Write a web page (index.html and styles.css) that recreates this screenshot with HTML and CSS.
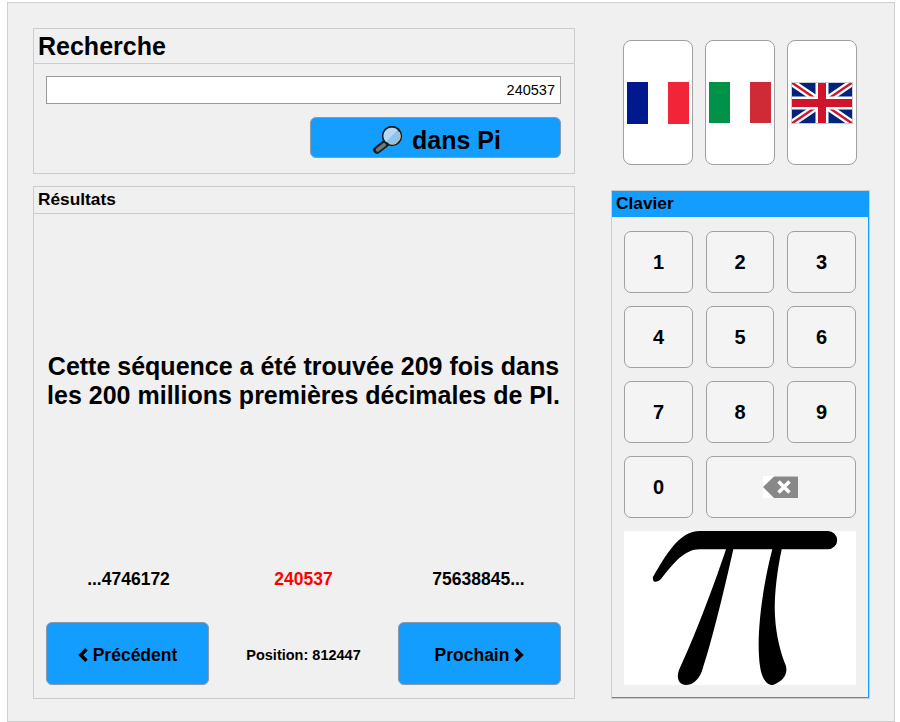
FILE: index.html
```html
<!DOCTYPE html>
<html lang="fr">
<head>
<meta charset="utf-8">
<title>Recherche dans Pi</title>
<link rel="stylesheet" href="styles.css">
</head>
<body>
<main class="app">
  <div class="left">
    <section class="panel search">
      <h1 class="panel-title big">Recherche</h1>
      <div class="search-body">
        <div class="field">240537</div>
        <button class="btn primary go">
          <svg class="lens" width="30" height="28" viewBox="0 0 30 28">
            <path d="M12.5 17.5 L4 24" stroke="#1c1c1c" stroke-width="7.5" stroke-linecap="round"/>
            <path d="M11.5 18.5 L4.5 24" stroke="#6d7a7c" stroke-width="3.5" stroke-linecap="round"/>
            <circle cx="19" cy="10" r="9.2" fill="#8fc3ee" stroke="#1c1c1c" stroke-width="2"/>
            <path d="M13 16 A8 8 0 0 1 24.5 4 Z" fill="#b5d8f5"/>
            <path d="M26 6 A8 8 0 0 1 16 17.5" fill="none" stroke="#e8c98f" stroke-width="1"/>
          </svg>
          <span class="go-label">dans Pi</span>
        </button>
      </div>
    </section>
    <section class="panel results">
      <h2 class="panel-title">Résultats</h2>
      <div class="results-body">
        <p class="message">Cette séquence a été trouvée 209 fois dans les 200 millions premières décimales de PI.</p>
        <div class="digits">
          <span class="d">...4746172</span>
          <span class="d hit">240537</span>
          <span class="d">75638845...</span>
        </div>
        <div class="nav">
          <button class="btn primary step">
            <svg class="chev" width="10" height="14" viewBox="0 0 10 14"><path d="M8.5 1.2 L2.7 7 L8.5 12.8" fill="none" stroke="#000" stroke-width="3.4"/></svg>
            <span>Précédent</span>
          </button>
          <span class="pos">Position: 812447</span>
          <button class="btn primary step">
            <span>Prochain</span>
            <svg class="chev" width="10" height="14" viewBox="0 0 10 14"><path d="M1.5 1.2 L7.3 7 L1.5 12.8" fill="none" stroke="#000" stroke-width="3.4"/></svg>
          </button>
        </div>
      </div>
    </section>
  </div>
  <div class="right">
    <div class="flags">
      <button class="flag">
        <svg width="62" height="42" viewBox="0 0 62 42"><rect width="21" height="42" fill="#00198c"/><rect x="21" width="20" height="42" fill="#fff"/><rect x="41" width="21" height="42" fill="#f22438"/></svg>
      </button>
      <button class="flag">
        <svg width="62" height="41" viewBox="0 0 62 41"><rect width="21" height="41" fill="#009246"/><rect x="21" width="20" height="41" fill="#fff"/><rect x="41" width="21" height="41" fill="#ce2b37"/></svg>
      </button>
      <button class="flag">
        <svg width="62" height="42" viewBox="0 0 62 42">
          <rect width="62" height="42" fill="#00247d"/>
          <path d="M0 0 L62 42 M62 0 L0 42" stroke="#fff" stroke-width="7"/>
          <path d="M0 0 L31 21 M62 42 L31 21 M62 0 L31 21 M0 42 L31 21" stroke="#cf142b" stroke-width="2.4"/>
          <path d="M31 0 V42 M0 21 H62" stroke="#fff" stroke-width="13"/>
          <path d="M31 0 V42 M0 21 H62" stroke="#cf142b" stroke-width="8"/>
          <rect x=".5" y=".5" width="61" height="41" fill="none" stroke="#ccc"/>
        </svg>
      </button>
    </div>
    <section class="keypad">
      <h2 class="keypad-title">Clavier</h2>
      <div class="keys">
        <button class="key">1</button>
        <button class="key">2</button>
        <button class="key">3</button>
        <button class="key">4</button>
        <button class="key">5</button>
        <button class="key">6</button>
        <button class="key">7</button>
        <button class="key">8</button>
        <button class="key">9</button>
        <button class="key">0</button>
        <button class="key wide">
          <svg width="35" height="22" viewBox="0 0 35 22">
            <rect width="35" height="22" fill="#fff"/>
            <path d="M11 0.5 H35 V22 H11 L0 11 Z" fill="#888"/>
            <path d="M15.5 5.5 L26.5 16.5 M26.5 5.5 L15.5 16.5" stroke="#fff" stroke-width="3.6"/>
          </svg>
        </button>
      </div>
      <div class="pi">
        <svg width="232" height="154" viewBox="0 0 232 154">
          <path d="M76 0 H204 a9.15 9.15 0 0 1 0 18.3 H157.7 C152 45 150 70 151 85 C152 105 157 123 162 135 C164 145 158 150 149 154 C141 154 136 145 135 125 C133 95 140 50 148.3 18.3 H109.3 C100 60 88 110 78 140 C74 150 68 154 62 154 C55 154 52 147 55 139 C70 107 88 60 102 18.3 H76 C60 18.3 50 32 37 48 C33 52 28 52 29 46 C42 24 55 0 76 0 Z" fill="#000"/>
        </svg>
      </div>
    </section>
  </div>
</main>
</body>
</html>
```
FILE: styles.css
```css
* { box-sizing: border-box; }
html, body { margin: 0; padding: 0; background: #fff; }
body { font-family: "Liberation Sans", Arial, sans-serif; color: #000; }
button { font-family: inherit; color: inherit; cursor: pointer; padding: 0; }

.app {
  display: flex;
  width: 888px;
  height: 720px;
  margin: 2px 0 0 7px;
  padding: 25px 25px 22px 25px;
  background: #f0f0f0;
  border: 1px solid #d0d0d0;
}

.left { display: flex; flex-direction: column; gap: 12px; width: 542px; }

.panel { border: 1px solid #ccc; }
.panel-title { margin: 0; font-weight: bold; border-bottom: 1px solid #ccc; font-size: 17.3px; line-height: 25px; padding: 0 0 1px 4px; }
.panel-title.big { font-size: 25px; line-height: 35px; height: 35px; padding: 0 0 0 4px; }

.search { height: 146px; }
.search-body { display: flex; flex-direction: column; align-items: flex-end; gap: 13px; padding: 12px 13px; }
.field {
  width: 515px; height: 28px;
  background: #fff; border: 1px solid #999;
  font-size: 14.5px; line-height: 27px; text-align: right; padding-right: 5px;
}

.btn { border: 1px solid #8c9aa8; border-radius: 6px; font-weight: bold; }
.primary { background: #139eff; }
.go { width: 251px; height: 41px; padding: 4px 0 0 3px; font-size: 25px; display: flex; align-items: center; justify-content: center; gap: 9px; }
.go-label { padding-top: 2px; }
.lens { display: block; }

.results { flex: 1; display: flex; flex-direction: column; }
.results-body { flex: 1; display: flex; flex-direction: column; padding: 0 13px 13px 12px; }
.message { margin: 0; height: 333px; display: flex; align-items: center; text-align: center; font-size: 25px; font-weight: bold; line-height: 29px; }
.digits { display: grid; grid-template-columns: repeat(3, 1fr); font-size: 17.5px; font-weight: bold; text-align: center; line-height: 18px; margin: 23px -5px 0; }
.hit { color: #f00; }
.nav { display: flex; justify-content: space-between; align-items: center; margin-top: 34px; }
.step { width: 163px; height: 63px; padding-top: 3px; font-size: 17.5px; display: flex; align-items: center; justify-content: center; gap: 5px; }
.chev { display: block; }
.pos { font-size: 14.5px; font-weight: bold; padding-top: 3px; }

.right { flex: 1; display: flex; flex-direction: column; align-items: center; padding-left: 36px; }
.flags { display: flex; gap: 12px; margin: 12px 2px 0 0; }
.flag {
  width: 70px; height: 125px;
  background: #fff; border: 1px solid #a0a0a0; border-radius: 8px;
  display: flex; align-items: center; justify-content: center;
}
.flag svg { display: block; }

.keypad {
  width: 259px; height: 509px; margin-top: 25px;
  border: 1px solid #ccc;
  box-shadow: inset -1px -1px 0 #139eff;
}
.keypad-title { margin: 0; background: #139eff; font-size: 17.3px; line-height: 25px; padding: 0 0 1px 4px; font-weight: bold; }
.keys { display: grid; grid-template-columns: 69px 68px 69px; gap: 13px; padding: 14px 0 0 12px; }
.key {
  height: 62px; background: #f4f4f4; border: 1px solid #a0a0a0; border-radius: 7px;
  font-size: 20px; font-weight: bold;
  display: flex; align-items: center; justify-content: center;
}
.wide { grid-column: span 2; }
.wide svg { display: block; margin-right: 1px; }
.pi { width: 232px; height: 154px; margin: 13px 0 0 12px; background: #fff; }
.pi svg { display: block; }
```
